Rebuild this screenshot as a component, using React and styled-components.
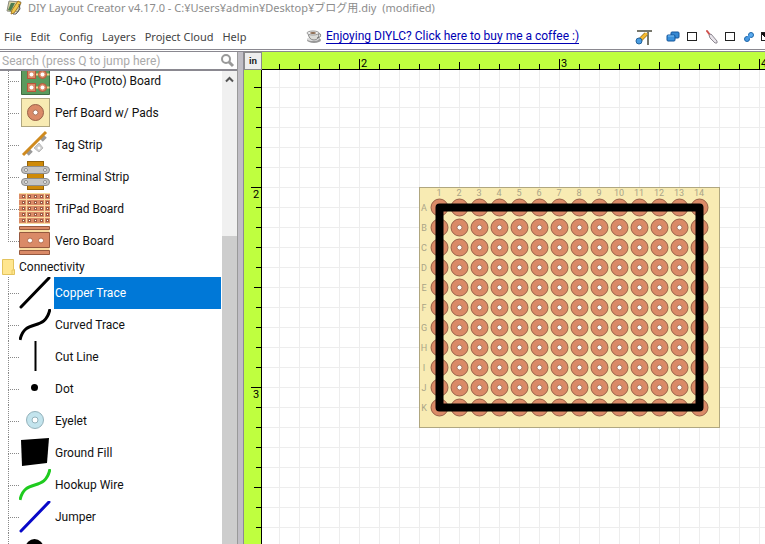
import React, { useState } from 'react'
import styled, { createGlobalStyle } from 'styled-components'

const UI_FONT = '"Noto Sans", "Noto Sans CJK JP", sans-serif'
const TREE_FONT = 'Roboto, "Noto Sans CJK JP", sans-serif'

const GlobalStyle = createGlobalStyle`
  * {
    box-sizing: border-box;
  }
  body {
    margin: 0;
    background: white;
    overflow: hidden;
  }
`

const Window = styled.div`
  display: flex;
  flex-direction: column;
  height: 100vh;
  overflow: hidden;
  background: white;
  font-family: ${UI_FONT};
  font-size: 12px;
`

const TitleBar = styled.header`
  display: flex;
  align-items: center;
  flex: none;
  height: 16px;
  padding-left: 6px;
  gap: 6px;
  color: #8c8c8c;
  font-size: 11px;
  line-height: 16px;
  white-space: pre;
`

const MenuBar = styled.div`
  display: flex;
  align-items: center;
  flex: none;
  height: 33px;
  padding: 8px 0 0 4px;
  white-space: nowrap;
  overflow: hidden;
`

const Menus = styled.nav`
  display: flex;
  flex: none;
  gap: 9px;
  width: 302px;
  font-size: 11px;
`

const MenuButton = styled.button`
  padding: 0;
  border: 0;
  background: none;
  color: #444;
  font: inherit;
  line-height: 18px;
`

const CoffeeLink = styled.a`
  display: flex;
  align-items: center;
  flex: none;
  width: 329px;
  gap: 4px;
  color: #0000b4;
  font-family: ${TREE_FONT};
  line-height: 18px;
  text-decoration: none;

  span {
    border-bottom: 1px solid #0000b4;
    line-height: 14px;
  }
`

const Tools = styled.div`
  display: flex;
  align-items: center;
  flex: none;
  gap: 9px;
`

const LayerToggle = styled.label`
  display: flex;
  align-items: center;
  gap: 7px;
`

const CheckBox = styled.input`
  appearance: none;
  width: 10px;
  height: 9px;
  margin: 0;
  border: 1px solid #222;
  background: white;

  &:checked {
    background: linear-gradient(45deg, transparent 35%, #111 35%, #111 60%, transparent 60%);
  }
`

const Workspace = styled.div`
  display: grid;
  grid-template-columns: 238px 6px minmax(0, 1fr);
  flex: 1;
  min-height: 0;
  border-top: 3px double #8a8890;
`

const SidePanel = styled.aside`
  display: flex;
  flex-direction: column;
  min-height: 0;
  border-right: 1px solid #999;
`

const SearchBox = styled.label`
  display: flex;
  align-items: center;
  flex: none;
  height: 19px;
  padding: 0 2px;
  border-bottom: 2px solid #8a8890;

  input {
    flex: 1;
    min-width: 0;
    padding: 0;
    border: 0;
    outline: 0;
    background: none;
    font: 12px/16px ${TREE_FONT};
  }

  input::placeholder {
    color: #aaa;
    opacity: 1;
  }
`

const TreeArea = styled.div`
  display: flex;
  flex: 1;
  min-height: 0;
  overflow: hidden;
`

const Tree = styled.ul`
  flex: 1;
  min-width: 0;
  margin: -6px 0 0;
  padding: 0;
  list-style: none;
  font-family: ${TREE_FONT};
  color: #111;
`

const TreeRow = styled.li`
  display: flex;
  align-items: center;
  height: 32px;
  padding-left: 8px;
`

const Branch = styled.span`
  display: flex;
  flex-direction: column;
  flex: none;
  width: 11px;
  height: 32px;

  &::before {
    content: '';
    height: 16px;
    border-left: 1px dotted #888;
    border-bottom: 1px dotted #888;
  }

  &::after {
    content: '';
    flex: 1;
    border-left: ${({ $last }) => ($last ? '0' : '1px dotted #888')};
  }
`

const TreeLabel = styled.span`
  flex: 1;
  margin-left: 3px;
  padding-left: 1px;
  line-height: 32px;
  white-space: nowrap;
  color: ${({ $selected }) => ($selected ? 'white' : '#111')};
  background: ${({ $selected }) => ($selected ? '#0078d7' : 'transparent')};
`

const FolderRow = styled.li`
  display: flex;
  align-items: center;
  height: 20px;
  padding-left: 2px;
  gap: 4px;
  line-height: 20px;
`

const ScrollBar = styled.div`
  display: grid;
  grid-template-rows: 17px 148px 1fr;
  flex: none;
  width: 15px;
  margin-left: 1px;
  background: #f0f0f0;
`

const ScrollButton = styled.button`
  display: flex;
  align-items: center;
  justify-content: center;
  padding: 0;
  border: 0;
  background: #f0f0f0;
`

const ScrollThumb = styled.div`
  grid-row: 3;
  background: #cdcdcd;
`

const Splitter = styled.div`
  border-right: 1px solid #8c8a92;
  background: #c0bec5;
`

const Editor = styled.main`
  display: grid;
  grid-template-columns: 18px minmax(0, 1fr);
  grid-template-rows: 18px minmax(0, 1fr);
  min-height: 0;
`

const UnitButton = styled.button`
  padding: 0;
  border: 1px solid #8a8a8a;
  background: #eee;
  color: #111;
  font: bold 9px/14px "Liberation Sans", sans-serif;
`

const Drawing = styled.svg`
  display: block;
  width: 100%;
  height: 100%;
  background: ${({ $ruler }) => ($ruler ? '#bfff3f' : 'white')};
  font-family: ${TREE_FONT};
`

const STEP = 20

const range = (n) => Array.from({ length: n }, (_, i) => i)

const tickSize = (i) => {
  if (i % 10 === 0) return 10
  return i % 5 === 0 ? 7 : 5
}

const AppIcon = () => (
  <svg width="16" height="16" viewBox="0 0 16 16">
    <path d="M3 1 15 2 12 12 1 11Z" fill="#d9d2a0" stroke="#8b8b80" />
    <path d="M5 3 9 3 5 11 2 10Z" fill="#4c7c50" />
    <path d="M12 1 15 3 8 13 5 14 6 10Z" fill="#f2c94c" stroke="#a67b28" />
    <path d="M13 4 14 9 10 14 7 14" fill="none" stroke="#555" />
  </svg>
)

const CoffeeIcon = () => (
  <svg width="16" height="16" viewBox="0 0 16 16">
    <ellipse cx="8" cy="11" rx="7" ry="3" fill="#999" />
    <ellipse cx="7" cy="10" rx="6" ry="2" fill="#ddd" />
    <path d="M2 4Q3 11 8 11T13 4Z" fill="#dcdcd8" stroke="#888" />
    <path d="M12 5q4-1 2 3l-3 1" fill="none" stroke="#777" />
    <ellipse cx="7" cy="4" rx="6" ry="2" fill="#eee" stroke="#999" />
    <ellipse cx="7" cy="4" rx="3" ry="1" fill="#8a6a50" />
  </svg>
)

const SnapIcon = () => (
  <svg width="22" height="16" viewBox="0 0 22 16">
    <path d="M2 2H17M13 1V16" stroke="#77776c" strokeWidth="2" />
    <path d="M4 12 11 5" stroke="#8a6412" strokeWidth="4" />
    <path d="M5 11 11 5" stroke="#f5b82e" strokeWidth="3" strokeLinecap="round" />
    <circle cx="4" cy="12" r="3" fill="#4a9de0" stroke="#24639c" />
  </svg>
)

const LayersIcon = () => (
  <svg width="14" height="12" viewBox="0 0 14 12">
    <rect x="5" y="1" width="8" height="6" rx="1" fill="#3488d4" stroke="#12549a" />
    <rect x="1" y="4" width="8" height="6" rx="1" fill="#3a91dc" stroke="#12549a" />
    <path d="M2 5H8" stroke="#7fc1f4" />
  </svg>
)

const BrushIcon = () => (
  <svg width="12" height="16" viewBox="1 0 12 16">
    <path d="M2 2 5 6" stroke="#d0504c" strokeWidth="2" strokeLinecap="round" />
    <path d="M4 6 6 5 12 12 12 14 10 14 5 9Z" fill="#e8e4ea" stroke="#8c8790" />
  </svg>
)

const PillIcon = () => (
  <svg width="10" height="12" viewBox="1 0 10 12">
    <circle cx="8" cy="4" r="2.500" fill="#5cacf0" stroke="#1e66a8" />
    <circle cx="4" cy="8" r="2.500" fill="#4a9be4" stroke="#1e66a8" />
    <path d="M5 7 7 5" stroke="#4a9be4" strokeWidth="3" />
  </svg>
)

const SearchIcon = () => (
  <svg width="15" height="15" viewBox="0 0 15 15" fill="none" stroke="#999">
    <circle cx="6" cy="6" r="4" strokeWidth="2" />
    <path d="M9 9 13 13" strokeWidth="3" />
  </svg>
)

const FolderIcon = () => (
  <svg width="13" height="17" viewBox="0 0 13 17">
    <path d="M0.500 0.500H11.500V10.500H12.500V15.500H0.500Z" fill="#ffe68f" stroke="#e3c35d" />
    <path d="M10 15V11H12" fill="none" stroke="#e8c862" />
  </svg>
)

const Pad = ({ cx, cy, r = 8.5 }) => (
  <g>
    <circle cx={cx} cy={cy} r={r} fill="#da8a67" stroke="#986048" />
    <circle cx={cx} cy={cy} r="2.500" fill="white" stroke="#a8755c" />
  </g>
)

const glyphs = {
  proto: (
    <g>
      <path d="M2.500 0V29.500H30.500V0" fill="#5b9a5d" stroke="#416b43" />
      {[10, 23].map((y) => (
        <g key={y}>
          <path d={`M12 ${y - 0.5}H30.500`} stroke="#f0d68c" strokeWidth="2" />
          <rect x="8.500" y={y - 4.5} width="8" height="8" fill="#da8a67" stroke="#b8553c" />
          <circle cx="23.500" cy={y - 0.5} r="4" fill="#da8a67" stroke="#b8553c" />
          <circle cx="12.500" cy={y - 0.5} r="2" fill="white" />
          <circle cx="23.500" cy={y - 0.5} r="2" fill="white" />
        </g>
      ))}
    </g>
  ),
  perf: (
    <g>
      <rect x="2.500" y="1.500" width="28" height="28" fill="#f8ebb3" stroke="#b0a780" />
      <Pad cx={16.5} cy={15.5} r={8} />
    </g>
  ),
  tag: (
    <g>
      <path d="M15 19 20 14 24 19 20 23Z" fill="#ccc" stroke="#bbb" />
      <circle cx="20" cy="19" r="1.500" fill="white" />
      <path d="M8 25 12 21M22 11 26 7" stroke="#999" strokeWidth="5" />
      <path d="M4 26 27 3" stroke="#cf8a1e" strokeWidth="3" />
    </g>
  ),
  terminal: (
    <g>
      <rect x="8.500" y="0.500" width="16" height="28" fill="#cf8a08" stroke="#94630a" />
      {[9, 21].map((y) => (
        <g key={y}>
          <rect x="2.500" y={y - 3.5} width="28" height="7" rx="3.500" fill="#c4c4c4" stroke="#8c8c8c" />
          <circle cx="7" cy={y} r="1.500" fill="white" stroke="#8c8c8c" />
          <circle cx="26" cy={y} r="1.500" fill="white" stroke="#8c8c8c" />
        </g>
      ))}
    </g>
  ),
  tripad: (
    <g>
      <rect width="31" height="31" fill="#f9dda0" />
      {range(5).map((r) => (
        <g key={r}>
          {[[0, 7], [8, 17], [26, 5]].map(([x, w]) => (
            <rect key={x} x={x} y={r * 6 + 1} width={w} height="5" fill="#da8a67" />
          ))}
          {range(5).map((c) => (
            <rect key={c} x={c * 6 + 3.5} y={r * 6 + 2.5} width="2" height="2" fill="white" stroke="#9c5c43" />
          ))}
        </g>
      ))}
    </g>
  ),
  vero: (
    <g>
      <rect x="0.500" y="1.500" width="30" height="28" fill="#f9dda0" />
      <path d="M0.500 1.500H30.500V4.500H0.500ZM0.500 7.500H30.500V22.500H0.500ZM0.500 25.500H30.500V29.500H0.500Z" fill="#da8a67" stroke="#96583f" />
      <circle cx="11" cy="15.500" r="2.500" fill="white" stroke="#b56e50" />
      <circle cx="22" cy="15.500" r="2.500" fill="white" stroke="#b56e50" />
    </g>
  ),
  copper: <path d="M2 30 30 1" stroke="black" strokeWidth="3" strokeLinecap="round" />,
  curved: <path d="M1 31C6 8 26 24 31 0" fill="none" stroke="black" strokeWidth="3" />,
  cut: <path d="M16.500 0V30" stroke="black" strokeWidth="2" />,
  dot: <circle cx="15.500" cy="14.500" r="3.500" fill="black" />,
  eyelet: (
    <g>
      <circle cx="16" cy="15" r="8.500" fill="#c3e4ed" stroke="#94b2bb" />
      <circle cx="16" cy="15" r="3" fill="white" stroke="#94b2bb" />
    </g>
  ),
  fill: <path d="M2 3 30 1 28 26 3 29Z" fill="black" />,
  hookup: <path d="M1 31C6 8 26 24 31 0" fill="none" stroke="#1fcb1f" strokeWidth="3" />,
  jumper: <path d="M2 30 30 1" stroke="#0808c8" strokeWidth="3" strokeLinecap="round" />,
  round: <circle cx="15.500" cy="15" r="9" fill="black" />
}

const boards = [
  ['proto', 'P-0+o (Proto) Board'],
  ['perf', 'Perf Board w/ Pads'],
  ['tag', 'Tag Strip'],
  ['terminal', 'Terminal Strip'],
  ['tripad', 'TriPad Board'],
  ['vero', 'Vero Board']
]

const connectivity = [
  ['copper', 'Copper Trace'],
  ['curved', 'Curved Trace'],
  ['cut', 'Cut Line'],
  ['dot', 'Dot'],
  ['eyelet', 'Eyelet'],
  ['fill', 'Ground Fill'],
  ['hookup', 'Hookup Wire'],
  ['jumper', 'Jumper'],
  ['round', '']
]

const TreeItem = ({ id, label, last, selected, onSelect }) => (
  <TreeRow role="treeitem" aria-selected={selected} onClick={() => onSelect(id)}>
    <Branch $last={last} />
    <svg width="32" height="32" viewBox="0 0 32 32">{glyphs[id]}</svg>
    <TreeLabel $selected={selected}>{label}</TreeLabel>
  </TreeRow>
)

const HorizontalRuler = ({ length }) => (
  <Drawing $ruler>
    {range(Math.ceil(length / STEP)).map((i) => (
      <path key={i} d={`M${i * STEP + 17.5} 17V${17 - tickSize(i + 6)}`} stroke="black" />
    ))}
    {range(Math.ceil((length - 99) / 200)).map((i) => (
      <text key={i} x={i * 200 + 99} y="15" fontSize="11">{i + 2}</text>
    ))}
    <path d={`M0 17.500H${length}`} stroke="black" />
  </Drawing>
)

const VerticalRuler = ({ length }) => (
  <Drawing $ruler>
    {range(Math.ceil(length / STEP)).map((i) => (
      <path key={i} d={`M17 ${i * STEP + 17.5}H${17 - tickSize(i + 5)}`} stroke="black" />
    ))}
    {range(Math.ceil((length - 128) / 200)).map((i) => (
      <text key={i} x="9" y={i * 200 + 128} fontSize="11">{i + 2}</text>
    ))}
    <path d={`M17.500 0V${length}`} stroke="black" />
  </Drawing>
)

const Board = () => (
  <g transform="translate(157 117)">
    <rect x="0.500" y="0.500" width="300" height="240" fill="#f8ebb3" stroke="#b0a780" />
    <g fill="#aaa588" fontSize="9" textAnchor="middle">
      {range(14).map((c) => (
        <text key={c} x={c * STEP + 20} y="9">{c + 1}</text>
      ))}
      {range(11).map((r) => (
        <text key={r} x="5" y={r * STEP + 24}>{'ABCDEFGHIJK'[r]}</text>
      ))}
    </g>
    {range(11).map((r) =>
      range(14).map((c) => <Pad key={`${r}-${c}`} cx={c * STEP + 20.5} cy={r * STEP + 20.5} />)
    )}
    <rect x="20.500" y="20.500" width="260" height="200" fill="none" stroke="black" strokeWidth="8" strokeLinejoin="round" />
  </g>
)

const Canvas = () => (
  <Drawing>
    <defs>
      <pattern id="grid" x="17" y="17" width={STEP} height={STEP} patternUnits="userSpaceOnUse">
        <path d="M0.500 0V20M0 0.500H20" stroke="#ededed" />
      </pattern>
    </defs>
    <rect width="100%" height="100%" fill="url(#grid)" />
    <Board />
  </Drawing>
)

const App = () => {
  const [selected, setSelected] = useState('copper')

  const renderItem = ([id, label], i, list) => (
    <TreeItem
      key={id}
      id={id}
      label={label}
      last={list === boards && i === list.length - 1}
      selected={selected === id}
      onSelect={setSelected}
    />
  )

  return (
    <Window>
      <GlobalStyle />
      <TitleBar>
        <AppIcon />
        <span>{'DIY Layout Creator v4.17.0 - C:¥Users¥admin¥Desktop¥ブログ用.diy  (modified)'}</span>
      </TitleBar>
      <MenuBar>
        <Menus>
          {['File', 'Edit', 'Config', 'Layers', 'Project Cloud', 'Help'].map((name) => (
            <MenuButton key={name}>{name}</MenuButton>
          ))}
        </Menus>
        <CoffeeLink href="#coffee">
          <CoffeeIcon />
          <span>Enjoying DIYLC? Click here to buy me a coffee :)</span>
        </CoffeeLink>
        <Tools>
          <SnapIcon />
          <LayerToggle>
            <LayersIcon />
            <CheckBox type="checkbox" aria-label="Stack layers" />
          </LayerToggle>
          <LayerToggle>
            <BrushIcon />
            <CheckBox type="checkbox" aria-label="Paint" />
          </LayerToggle>
          <LayerToggle>
            <PillIcon />
            <CheckBox type="checkbox" aria-label="Link parts" defaultChecked />
          </LayerToggle>
        </Tools>
      </MenuBar>
      <Workspace>
        <SidePanel>
          <SearchBox>
            <input type="text" placeholder="Search (press Q to jump here)" aria-label="Search" />
            <SearchIcon />
          </SearchBox>
          <TreeArea>
            <Tree role="tree">
              {boards.map(renderItem)}
              <FolderRow role="treeitem">
                <FolderIcon />
                <span>Connectivity</span>
              </FolderRow>
              {connectivity.map(renderItem)}
            </Tree>
            <ScrollBar>
              <ScrollButton aria-label="Scroll up">
                <svg width="9" height="7" viewBox="0 0 9 7">
                  <path d="M1 5.500 4.500 2 8 5.500" fill="none" stroke="#555" strokeWidth="2" />
                </svg>
              </ScrollButton>
              <ScrollThumb />
            </ScrollBar>
          </TreeArea>
        </SidePanel>
        <Splitter />
        <Editor>
          <UnitButton>in</UnitButton>
          <HorizontalRuler length={window.innerWidth - 262} />
          <VerticalRuler length={window.innerHeight - 70} />
          <Canvas />
        </Editor>
      </Workspace>
    </Window>
  )
}

export default App
